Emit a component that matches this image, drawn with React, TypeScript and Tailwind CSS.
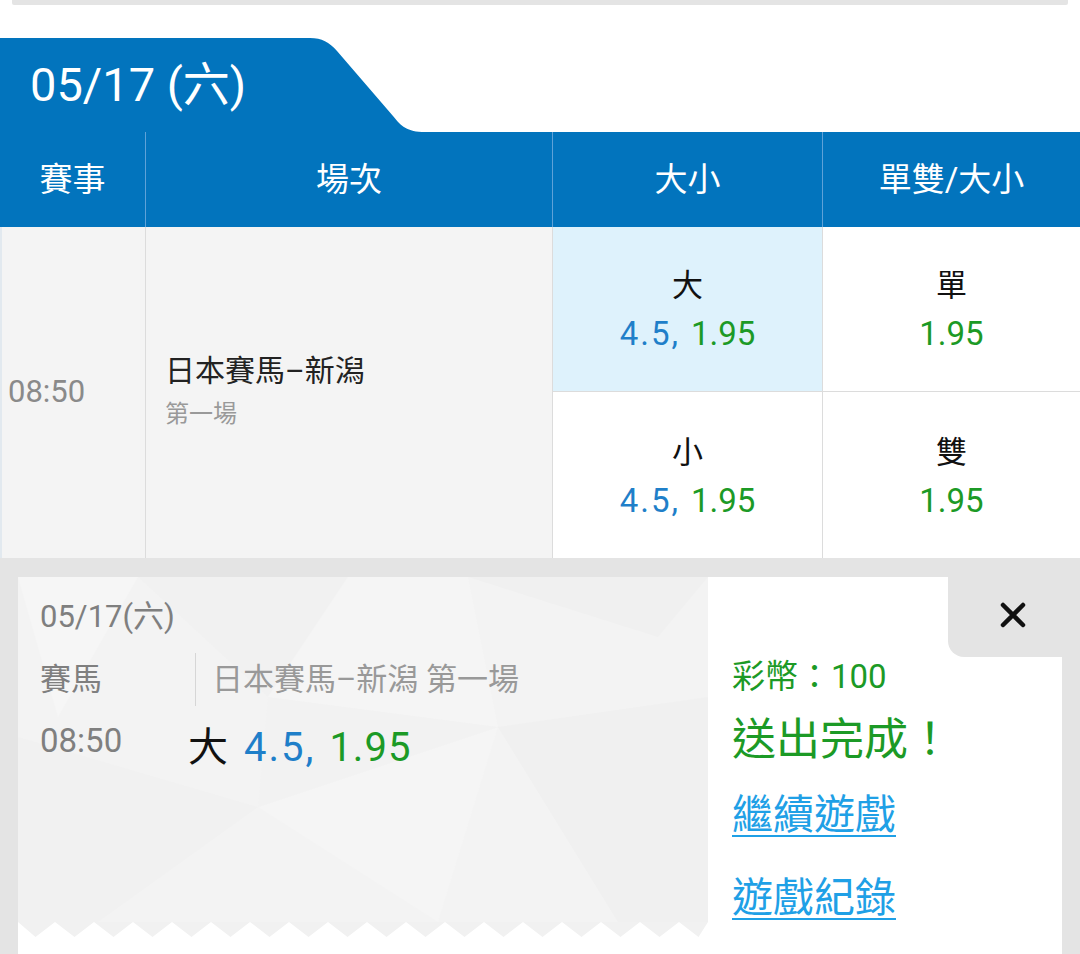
import React from "react";

function Zigzag() {
  const pts: string[] = ["0,0"];
  for (let k = 0; k < 20; k++) {
    const t = 17.5 + 39 * k;
    const p = 37 + 39 * k;
    if (t > 690) break;
    pts.push(`${t},15`);
    if (p > 690) break;
    pts.push(`${p},0`);
  }
  pts.push("690,0");
  return (
    <svg width="690" height="15" viewBox="0 0 690 15" className="block">
      <rect x="0" y="0" width="690" height="15" fill="#ffffff" />
      <polygon points={pts.join(" ")} fill="#f1f1f1" />
    </svg>
  );
}

function Texture() {
  return (
    <svg
      className="absolute inset-0"
      width="690"
      height="345"
      viewBox="0 0 690 345"
      preserveAspectRatio="none"
    >
      <rect width="690" height="345" fill="#f3f3f3" />
      <polygon points="0,0 120,0 40,140" fill="#f6f6f6" />
      <polygon points="120,0 330,0 250,120" fill="#f1f1f1" />
      <polygon points="450,0 690,0 640,60" fill="#f0f0f0" />
      <polygon points="0,160 240,230 80,345 0,345" fill="#f1f1f1" />
      <polygon points="240,230 480,150 420,345" fill="#f5f5f5" />
      <polygon points="480,150 690,120 690,345 600,345" fill="#f0f0f0" />
      <polygon points="250,120 480,150 240,230" fill="#f2f2f2" />
      <polygon points="330,0 450,0 480,150 250,120" fill="#f5f5f5" />
    </svg>
  );
}

function Odds({ big }: { big?: boolean }) {
  return (
    <>
      <span className="text-[#1f7fc9] tracking-[2px]">4.5,</span>
      <span className={"text-[#1c9a26] " + (big ? "ml-[14px] tracking-[1px]" : "ml-[11px]")}>1.95</span>
    </>
  );
}

export default function App() {
  return (
    <div className="w-[1080px] h-[954px] overflow-hidden bg-white flex flex-col font-[family-name:Roboto,'Noto_Sans_CJK_TC',sans-serif]">
      {/* top strip */}
      <div className="mx-[12px] h-[5px] bg-[#e4e4e4] rounded-b-[2px] shrink-0" />
      <div className="h-[33px] shrink-0" />

      {/* date tab */}
      <div className="flex h-[94px] shrink-0">
        <div className="w-[300px] bg-[#0274bd] flex items-center pl-[30px] text-white text-[47px] leading-none pb-[2px]">
          05/17 (六)
        </div>
        <svg width="125" height="94" viewBox="0 0 125 94" className="block">
          <path
            d="M0 0 H10 C22 0 29 4 37 13 L93 78 C101 88 107 94 125 94 H0 Z"
            fill="#0274bd"
          />
        </svg>
      </div>

      {/* header */}
      <div className="grid grid-cols-[146px_407px_270px_257px] h-[95px] bg-[#0274bd] text-white text-[33px] shrink-0">
        <div className="flex items-center justify-center border-r border-[#5fa2d8]">賽事</div>
        <div className="flex items-center justify-center border-r border-[#5fa2d8]">場次</div>
        <div className="flex items-center justify-center border-r border-[#5fa2d8]">大小</div>
        <div className="flex items-center justify-center">單雙/大小</div>
      </div>

      {/* body row */}
      <div className="grid grid-cols-[146px_407px_270px_257px] h-[331px] shrink-0">
        <div className="bg-[#f4f4f4] border-l-2 border-l-[#e2e9ef] border-r border-r-[#dcdcdc] flex items-center pl-[6px] text-[31px] text-[#8a8a8a]">
          08:50
        </div>
        <div className="bg-[#f4f4f4] border-r border-[#dcdcdc] flex flex-col justify-center pl-[19px]">
          <div className="text-[30px] leading-[40px] text-[#222]">日本賽馬–新潟</div>
          <div className="text-[24px] leading-[40px] text-[#999] mt-[3px]">第一場</div>
        </div>
        <div className="flex flex-col border-r border-[#dcdcdc]">
          <div className="h-[165px] bg-[#def2fc] border-b border-[#dcdcdc] flex flex-col items-center justify-center pt-[2px]">
            <div className="text-[31px] leading-[48px] text-[#111]">大</div>
            <div className="text-[33px] leading-[48px]">
              <Odds />
            </div>
          </div>
          <div className="flex-1 bg-white flex flex-col items-center justify-center pt-[4px]">
            <div className="text-[31px] leading-[48px] text-[#111]">小</div>
            <div className="text-[33px] leading-[48px]">
              <Odds />
            </div>
          </div>
        </div>
        <div className="flex flex-col">
          <div className="h-[165px] bg-white border-b border-[#dcdcdc] flex flex-col items-center justify-center pt-[2px]">
            <div className="text-[31px] leading-[48px] text-[#111]">單</div>
            <div className="text-[33px] leading-[48px] text-[#1c9a26]">1.95</div>
          </div>
          <div className="flex-1 bg-white flex flex-col items-center justify-center pt-[4px]">
            <div className="text-[31px] leading-[48px] text-[#111]">雙</div>
            <div className="text-[33px] leading-[48px] text-[#1c9a26]">1.95</div>
          </div>
        </div>
      </div>

      {/* overlay ticket */}
      <div className="flex-1 bg-[#e4e4e4] pt-[19px] px-[18px] flex min-h-0">
        <div className="flex w-full h-full bg-white">
          {/* left ticket */}
          <div className="w-[690px] flex flex-col">
            <div className="relative h-[345px] overflow-hidden">
              <Texture />
              <div className="relative pl-[22px] pt-[20px] text-[#7f7f7f]">
                <div className="text-[31px] leading-[40px]">05/17(六)</div>
                <div className="flex items-center mt-[16px] h-[53px]">
                  <div className="w-[155px] text-[31px] leading-[40px]">賽馬</div>
                  <div className="h-[53px] border-l border-[#d6d6d6]" />
                  <div className="pl-[16px] text-[31px] leading-[40px] text-[#999]">
                    日本賽馬–新潟 第一場
                  </div>
                </div>
                <div className="flex items-start mt-[15px]">
                  <div className="w-[148px] text-[33px] leading-[40px]">08:50</div>
                  <div className="text-[40px] leading-[50px] mt-[2px]">
                    <span className="text-[#111] mr-[16px]">大</span>
                    <Odds big />
                  </div>
                </div>
              </div>
            </div>
            <Zigzag />
            <div className="flex-1 bg-white" />
          </div>

          {/* right panel */}
          <div className="flex-1 bg-white flex flex-col">
            <div className="flex justify-end">
              <div className="w-[114px] h-[80px] bg-[#e4e4e4] rounded-bl-[16px] flex items-center justify-center pb-[4px] pl-[16px]">
                <svg width="28" height="28" viewBox="0 0 28 28">
                  <path
                    d="M4 4 L24 24 M24 4 L4 24"
                    stroke="#111"
                    strokeWidth="4.5"
                    strokeLinecap="round"
                  />
                </svg>
              </div>
            </div>
            <div className="pl-[24px] flex flex-col items-start">
              <div className="text-[33px] leading-[40px] text-[#1c9a26]">彩幣：100</div>
              <div className="text-[44px] leading-[52px] text-[#1c9a26] mt-[17px]">送出完成！</div>
              <div className="text-[41px] leading-[50px] text-[#1fa0e6] underline underline-offset-[6px] decoration-2 mt-[24px]">
                繼續遊戲
              </div>
              <div className="text-[41px] leading-[50px] text-[#1fa0e6] underline underline-offset-[6px] decoration-2 mt-[33px]">
                遊戲紀錄
              </div>
            </div>
          </div>
        </div>
      </div>
    </div>
  );
}
